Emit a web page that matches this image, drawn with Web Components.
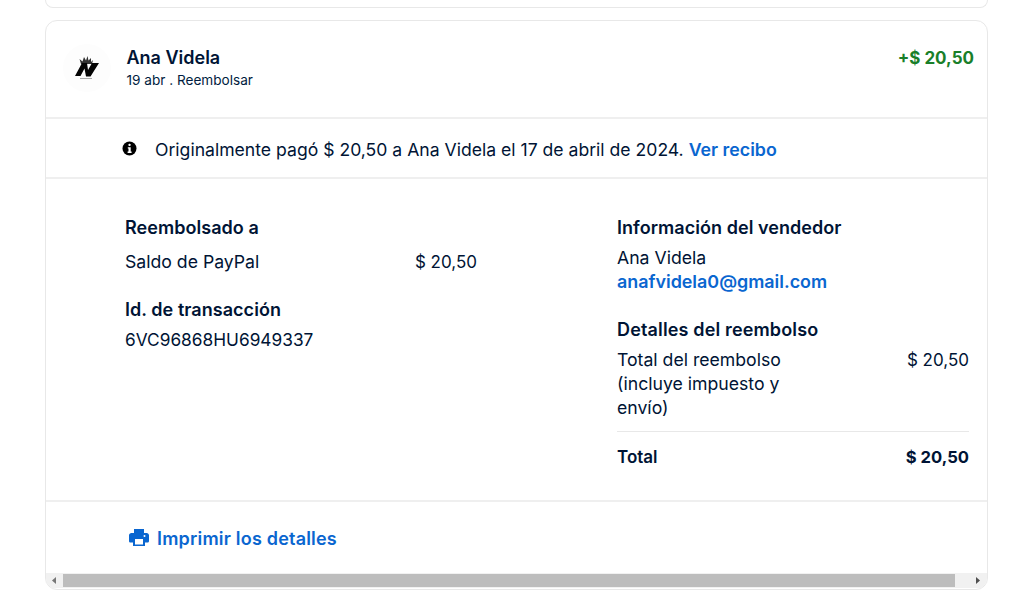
<!DOCTYPE html>
<html lang="es">
<head>
<meta charset="utf-8">
<title>Detalles de la transacción</title>
<style>
  html, body { margin: 0; background: #fff; }
  body { font-family: Inter, "Liberation Sans", sans-serif; color: #001435; overflow: hidden; height: 613px; }
  .page { padding: 0 40px 0 45px; }
</style>
</head>
<body>
<div class="page">
  <card-stub></card-stub>
  <txn-card>
    <txn-header name="Ana Videla" sub="19 abr . Reembolsar" amount="+$ 20,50"></txn-header>
    <txn-notice>Originalmente pagó $ 20,50 a Ana Videla el 17 de abril de 2024. <a slot="link">Ver recibo</a></txn-notice>
    <txn-details></txn-details>
    <txn-print>Imprimir los detalles</txn-print>
    <h-scrollbar></h-scrollbar>
  </txn-card>
</div>

<script>
class CardStub extends HTMLElement {
  constructor() {
    super();
    this.attachShadow({ mode: 'open' });
    this.shadowRoot.innerHTML = `
      <style>
        :host {
          display: block;
          height: 7px;
          border: 1px solid #e8e8e8;
          border-top: none;
          border-radius: 0 0 12px 12px;
        }
      </style>`;
  }
}

class TxnCard extends HTMLElement {
  constructor() {
    super();
    this.attachShadow({ mode: 'open' });
    this.shadowRoot.innerHTML = `
      <style>
        :host {
          display: block;
          margin-top: 12px;
          border: 1px solid #e8e8e8;
          border-radius: 12px;
          overflow: hidden;
          height: 568px;
        }
      </style>
      <slot></slot>`;
  }
}

class TxnHeader extends HTMLElement {
  constructor() {
    super();
    this.attachShadow({ mode: 'open' });
    this.shadowRoot.innerHTML = `
      <style>
        :host {
          display: flex;
          box-sizing: border-box;
          height: 98px;
          padding: 23px 13px 0 17px;
          border-bottom: 2px solid #efefef;
          gap: 16px;
        }
        .avatar {
          width: 48px;
          height: 48px;
          border-radius: 50%;
          background: #fdfdfd;
          flex: none;
          display: flex;
          align-items: center;
          justify-content: center;
        }
        .who { flex: 1; padding-top: 3px; margin-left: -0.5px; }
        .name { font-size: 18px; font-weight: 600; line-height: 22px; }
        .sub { font-size: 13.6px; line-height: 20px; color: #001c40; margin-top: 1px; }
        .amount { font-size: 17px; font-weight: 700; line-height: 22px; color: #1a7f2a; padding-top: 3px; }
      </style>
      <div class="avatar">
        <svg width="28" height="28" viewBox="0 0 28 28">
          <path d="M8 10 L6.500 5 L9.500 7.500 L11 3 L13 6.500 L14.500 2 L15.500 6.500 L18 4 L18 8 L20 6 L19 10 Z" fill="#333"/>
          <path d="M2 22 L9 9 H14 L15 16 L19 9 H26 L17.500 22.500 H13 L11.500 14.500 L7.500 22 Z" fill="#050505"/>
          <rect x="7" y="24" width="12" height="1" fill="#aaa"/>
        </svg>
      </div>
      <div class="who">
        <div class="name">${this.getAttribute('name')}</div>
        <div class="sub">${this.getAttribute('sub')}</div>
      </div>
      <div class="amount">${this.getAttribute('amount')}</div>`;
  }
}

class TxnNotice extends HTMLElement {
  constructor() {
    super();
    this.attachShadow({ mode: 'open' });
    this.shadowRoot.innerHTML = `
      <style>
        :host {
          display: flex;
          box-sizing: border-box;
          height: 60px;
          padding: 0 0 0 76px;
          align-items: center;
          gap: 18px;
          border-bottom: 2px solid #efefef;
          font-size: 17.6px;
        }
        svg { flex: none; }
        .text { padding-top: 2px; }
        ::slotted(a) { color: #0a66d0; font-weight: 600; font-size: 17.8px; }
      </style>
      <svg width="15" height="15" viewBox="0 0 15 15">
        <circle cx="7.5" cy="7.5" r="7" fill="#000"/>
        <rect x="6.4" y="2.8" width="2.3" height="2.3" rx="1" fill="#fff"/>
        <path d="M5.8 6.3 H8.7 V10.6 H9.6 V12 H5.6 V10.6 H6.5 V7.6 H5.8 Z" fill="#fff"/>
      </svg>
      <div class="text"><slot></slot><slot name="link"></slot></div>`;
  }
}

class TxnDetails extends HTMLElement {
  constructor() {
    super();
    this.attachShadow({ mode: 'open' });
    this.shadowRoot.innerHTML = `
      <style>
        :host {
          display: grid;
          grid-template-columns: 352px 352px;
          column-gap: 140px;
          box-sizing: border-box;
          height: 323px;
          padding: 37px 0 0 79px;
          border-bottom: 2px solid #efefef;
          font-size: 17.65px;
          line-height: 24px;
        }
        h3 { margin: 0; font-size: 18px; line-height: 24px; font-weight: 600; letter-spacing: 0.05px; }
        .num { font-size: 17px; }
        .row { display: flex; justify-content: space-between; }
        .left .row { margin-top: 10px; }
        .left h3 + div { margin-top: 6px; }
        .left .id { margin-top: 24px; }
        .txid { font-size: 17.3px; }
        a { color: #0a66d0; font-weight: 600; display: block; font-size: 17.9px; }
        .seller { margin-top: 6px; }
        .refund { margin-top: 24px; }
        .refund h3 { letter-spacing: 0.15px; }
        .refund .line { width: 200px; margin-top: 6px; }
        .refund .amt { margin-top: 6px; }
        .total { margin-top: 11px; padding-top: 13px; border-top: 1px solid #e8e8e8; font-weight: 600; font-size: 17px; }
        .total .num { font-size: 16.6px; font-weight: 700; }
      </style>
      <div class="left">
        <h3>Reembolsado a</h3>
        <div class="row"><span>Saldo de PayPal</span><span class="num">$ 20,50</span></div>
        <h3 class="id">Id. de transacción</h3>
        <div class="txid">6VC96868HU6949337</div>
      </div>
      <div class="right">
        <h3>Información del vendedor</h3>
        <div class="seller">Ana Videla<a>anafvidela0@gmail.com</a></div>
        <div class="refund">
          <h3>Detalles del reembolso</h3>
          <div class="row"><span class="line">Total del reembolso (incluye impuesto y envío)</span><span class="num amt">$ 20,50</span></div>
          <div class="row total"><span>Total</span><span class="num">$ 20,50</span></div>
        </div>
      </div>`;
  }
}

class TxnPrint extends HTMLElement {
  constructor() {
    super();
    this.attachShadow({ mode: 'open' });
    this.shadowRoot.innerHTML = `
      <style>
        :host {
          display: flex;
          box-sizing: border-box;
          height: 71px;
          padding: 2px 0 0 83px;
          align-items: center;
          gap: 8px;
          color: #0a66d0;
          font-size: 18px;
          letter-spacing: 0.2px;
          font-weight: 600;
        }
        svg { margin-top: -2px; }
      </style>
      <svg width="20" height="17" viewBox="0 0 20 17">
        <path fill="#0a66d0" fill-rule="evenodd" d="M5 0 H15 V4 H17.5 C19 4 20 5 20 6.5 V12 C20 13 19.2 13.500 18.500 13.500 H16 V17 H4 V13.500 H1.500 C0.800 13.500 0 13 0 12 V6.500 C0 5 1 4 2.500 4 H5 Z M6 10 V15.500 H14 V10 Z M15.500 6 A1 1 0 1 0 15.500 8 A1 1 0 1 0 15.500 6 Z"/>
      </svg>
      <slot></slot>`;
  }
}

class HScrollbar extends HTMLElement {
  constructor() {
    super();
    this.attachShadow({ mode: 'open' });
    this.shadowRoot.innerHTML = `
      <style>
        :host {
          display: flex;
          height: 15px;
          background: #f1f1f1;
          align-items: center;
        }
        .btn { width: 17px; flex: none; display: flex; justify-content: center; }
        .thumb { height: 13px; width: 892px; background: #bdbdbd; flex: none; }
        .gap { flex: 1; }
      </style>
      <div class="btn"><svg width="5" height="7" viewBox="0 0 5 7"><path d="M4 0 V7 L0 3.500 Z" fill="#777"/></svg></div>
      <div class="thumb"></div>
      <div class="gap"></div>
      <div class="btn"><svg width="5" height="7" viewBox="0 0 5 7"><path d="M0 0 V7 L4 3.500 Z" fill="#505050"/></svg></div>`;
  }
}

customElements.define('card-stub', CardStub);
customElements.define('txn-card', TxnCard);
customElements.define('txn-header', TxnHeader);
customElements.define('txn-notice', TxnNotice);
customElements.define('txn-details', TxnDetails);
customElements.define('txn-print', TxnPrint);
customElements.define('h-scrollbar', HScrollbar);
</script>
</body>
</html>
